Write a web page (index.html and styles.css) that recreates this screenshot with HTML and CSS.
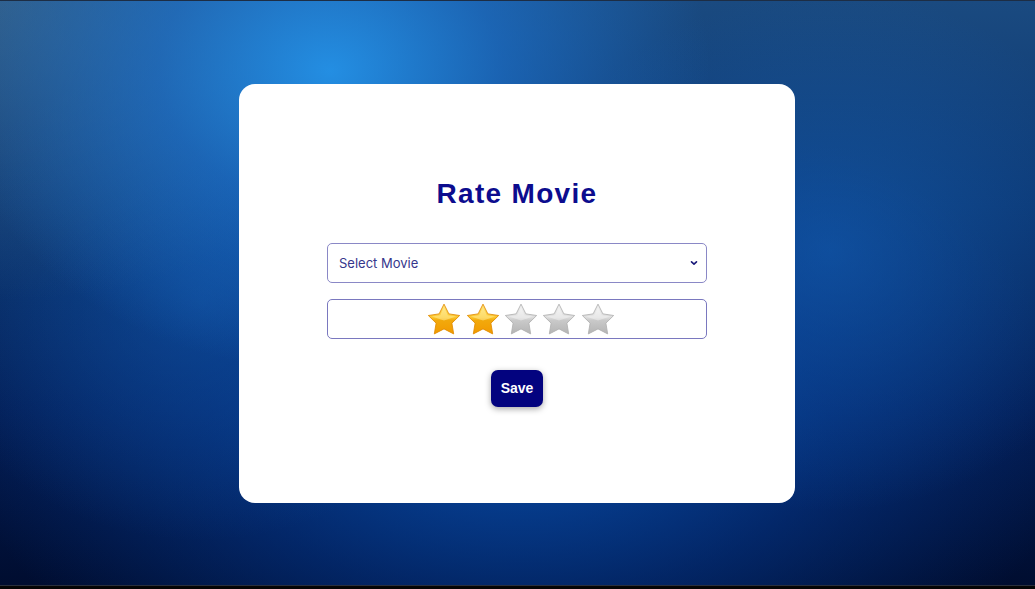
FILE: index.html
```html
<!DOCTYPE html>
<html lang="en">
<head>
<meta charset="utf-8">
<title>Rate Movie</title>
<link rel="stylesheet" href="styles.css">
</head>
<body>
<div class="page">
  <main class="card">
    <h1 class="title">Rate Movie</h1>
    <div class="select-box">
      <span class="select-text">Select Movie</span>
      <svg class="chevron" width="8" height="6" viewBox="0 0 8 6"><path d="M1.5 1.8 L4 4.2 L6.5 1.8" fill="none" stroke="#1a1a7a" stroke-width="1.6" stroke-linecap="round" stroke-linejoin="round"/></svg>
    </div>
    <div class="stars-box">
      <svg class="star" width="34" height="32" viewBox="0 0 32 30">
        <defs><linearGradient id="g1" x1="0" y1="0" x2="0" y2="1"><stop offset="0" stop-color="#ffe680"/><stop offset="0.45" stop-color="#fcc52a"/><stop offset="0.55" stop-color="#f2a90c"/><stop offset="1" stop-color="#f29a00"/></linearGradient></defs>
        <path d="M16 1 L20.59 10.19 L30.74 11.71 L23.42 18.91 L25.11 29.04 L16 24.3 L6.89 29.04 L8.58 18.91 L1.26 11.71 L11.41 10.19 Z" fill="url(#g1)" stroke="#e08a00" stroke-width="0.8" stroke-linejoin="round"/>
        <path d="M16 4 L19.6 11.4 L27.5 12.6 L16 16.5 L4.5 12.6 L12.4 11.4 Z" fill="#fff3b0" opacity="0.45"/>
      </svg>
      <svg class="star" width="34" height="32" viewBox="0 0 32 30">
        <defs><linearGradient id="g2" x1="0" y1="0" x2="0" y2="1"><stop offset="0" stop-color="#ffe680"/><stop offset="0.45" stop-color="#fcc52a"/><stop offset="0.55" stop-color="#f2a90c"/><stop offset="1" stop-color="#f29a00"/></linearGradient></defs>
        <path d="M16 1 L20.59 10.19 L30.74 11.71 L23.42 18.91 L25.11 29.04 L16 24.3 L6.89 29.04 L8.58 18.91 L1.26 11.71 L11.41 10.19 Z" fill="url(#g2)" stroke="#e08a00" stroke-width="0.8" stroke-linejoin="round"/>
        <path d="M16 4 L19.6 11.4 L27.5 12.6 L16 16.5 L4.5 12.6 L12.4 11.4 Z" fill="#fff3b0" opacity="0.45"/>
      </svg>
      <svg class="star" width="34" height="32" viewBox="0 0 32 30">
        <defs><linearGradient id="s3" x1="0" y1="0" x2="0" y2="1"><stop offset="0" stop-color="#f2f2f2"/><stop offset="0.45" stop-color="#dcdcdc"/><stop offset="0.55" stop-color="#c9c9c9"/><stop offset="1" stop-color="#b4b4b4"/></linearGradient></defs>
        <path d="M16 1 L20.59 10.19 L30.74 11.71 L23.42 18.91 L25.11 29.04 L16 24.3 L6.89 29.04 L8.58 18.91 L1.26 11.71 L11.41 10.19 Z" fill="url(#s3)" stroke="#b0b0b0" stroke-width="0.8" stroke-linejoin="round"/>
        <path d="M16 4 L19.6 11.4 L27.5 12.6 L16 16.5 L4.5 12.6 L12.4 11.4 Z" fill="#ffffff" opacity="0.35"/>
      </svg>
      <svg class="star" width="34" height="32" viewBox="0 0 32 30">
        <defs><linearGradient id="s4" x1="0" y1="0" x2="0" y2="1"><stop offset="0" stop-color="#f2f2f2"/><stop offset="0.45" stop-color="#dcdcdc"/><stop offset="0.55" stop-color="#c9c9c9"/><stop offset="1" stop-color="#b4b4b4"/></linearGradient></defs>
        <path d="M16 1 L20.59 10.19 L30.74 11.71 L23.42 18.91 L25.11 29.04 L16 24.3 L6.89 29.04 L8.58 18.91 L1.26 11.71 L11.41 10.19 Z" fill="url(#s4)" stroke="#b0b0b0" stroke-width="0.8" stroke-linejoin="round"/>
        <path d="M16 4 L19.6 11.4 L27.5 12.6 L16 16.5 L4.5 12.6 L12.4 11.4 Z" fill="#ffffff" opacity="0.35"/>
      </svg>
      <svg class="star" width="34" height="32" viewBox="0 0 32 30">
        <defs><linearGradient id="s5" x1="0" y1="0" x2="0" y2="1"><stop offset="0" stop-color="#f2f2f2"/><stop offset="0.45" stop-color="#dcdcdc"/><stop offset="0.55" stop-color="#c9c9c9"/><stop offset="1" stop-color="#b4b4b4"/></linearGradient></defs>
        <path d="M16 1 L20.59 10.19 L30.74 11.71 L23.42 18.91 L25.11 29.04 L16 24.3 L6.89 29.04 L8.58 18.91 L1.26 11.71 L11.41 10.19 Z" fill="url(#s5)" stroke="#b0b0b0" stroke-width="0.8" stroke-linejoin="round"/>
        <path d="M16 4 L19.6 11.4 L27.5 12.6 L16 16.5 L4.5 12.6 L12.4 11.4 Z" fill="#ffffff" opacity="0.35"/>
      </svg>
    </div>
    <button class="save-btn" type="button">Save</button>
  </main>
</div>
</body>
</html>
```

FILE: styles.css
```css
html, body {
  margin: 0;
  padding: 0;
}

body {
  background: #050505;
  height: 589px;
  overflow: hidden;
}

.page {
  height: 584px;
  border-top: 1px solid #1d2d44;
  border-bottom: 1px solid #2a2f3c;
  display: flex;
  align-items: center;
  justify-content: center;
  background:
    radial-gradient(ellipse 380px 300px at 330px 70px, rgba(36, 146, 232, 0.95) 0%, rgba(30, 120, 215, 0.6) 45%, rgba(20, 90, 190, 0) 100%),
    radial-gradient(ellipse 420px 300px at 0px 0px, rgba(70, 110, 140, 0.55) 0%, rgba(70, 110, 140, 0) 100%),
    radial-gradient(ellipse 300px 260px at 830px 250px, rgba(20, 100, 190, 0.55) 0%, rgba(20, 100, 190, 0) 100%),
    radial-gradient(ellipse 280px 240px at 200px 300px, rgba(20, 95, 180, 0.45) 0%, rgba(20, 95, 180, 0) 100%),
    radial-gradient(ellipse 560px 330px at 520px 420px, rgba(8, 80, 175, 0.9) 0%, rgba(5, 60, 150, 0.5) 55%, rgba(0, 40, 120, 0) 100%),
    linear-gradient(180deg, #1a4a80 0%, #0c3670 35%, #031c52 70%, #000d30 100%);
}

.card {
  width: 556px;
  height: 419px;
  margin-right: 1px;
  box-sizing: border-box;
  background: #ffffff;
  border-radius: 16px;
  display: flex;
  flex-direction: column;
  align-items: center;
  justify-content: center;
  padding-bottom: 2px;
}

.title {
  margin: 0 0 32px 0;
  font-family: "Liberation Sans", Arial, sans-serif;
  font-size: 28px;
  line-height: 34px;
  font-weight: 700;
  letter-spacing: 1.3px;
  color: #0c0c8e;
}

.select-box {
  width: 380px;
  height: 40px;
  box-sizing: border-box;
  border: 1px solid #8a88c6;
  border-radius: 5px;
  display: flex;
  align-items: center;
  justify-content: space-between;
  padding: 0 8px 0 11px;
  margin-bottom: 16px;
}

.select-text {
  font-family: "Inter", "Liberation Sans", sans-serif;
  font-size: 13px;
  color: #36368c;
}

.chevron {
  display: block;
}

.stars-box {
  width: 380px;
  height: 40px;
  box-sizing: border-box;
  border: 1px solid #7a78bf;
  border-radius: 5px;
  display: flex;
  align-items: center;
  justify-content: center;
  gap: 4.3px;
  padding-left: 8px;
  margin-bottom: 31px;
}

.star {
  display: block;
}

.save-btn {
  font-family: "Liberation Sans", Arial, sans-serif;
  font-size: 14px;
  font-weight: 700;
  color: #ffffff;
  background: #03037f;
  border: none;
  border-radius: 7px;
  padding: 10px 10px;
  line-height: 17px;
  box-shadow: 0 2px 6px rgba(0, 0, 0, 0.35);
  cursor: pointer;
}
```
